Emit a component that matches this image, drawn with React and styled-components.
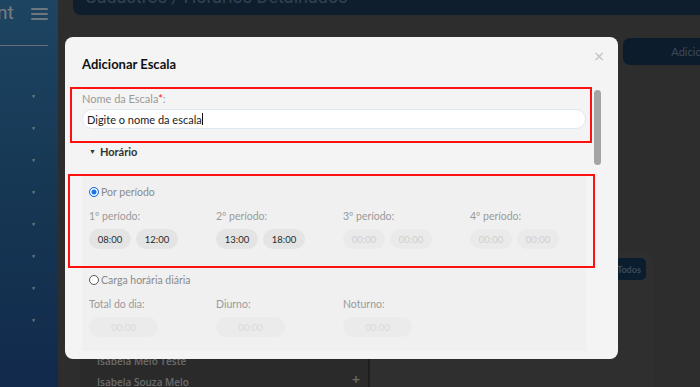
import React from 'react';
import styled, { createGlobalStyle } from 'styled-components';

const GlobalStyle = createGlobalStyle`
  html, body {
    margin: 0;
    padding: 0;
    width: 700px;
    height: 387px;
    overflow: hidden;
  }
  body {
    font-family: Lato, "Open Sans", "Liberation Sans", sans-serif;
    background: #5a5a5a;
  }
  * { box-sizing: border-box; }
`;

const menuItems = 8;
const names = [
  'Ana Paula Souza', 'Bruno Carvalho', 'Carla Mendes', 'Daniel Oliveira',
  'Eduardo Lima', 'Fernanda Alves', 'Gabriel Rocha', 'Helena Costa',
  'Igor Martins', 'Isabela Melo', 'Isabela Melo Lima', 'Isabela Melo Teste',
  'Isabela Souza Melo',
];

function App() {
  return (
    <>
      <GlobalStyle />
      <Page>
        <Sidebar>
          <Brand>
            <BrandText>nt</BrandText>
            <Burger><span /><span /><span /></Burger>
          </Brand>
          <Menu>
            {Array.from({ length: menuItems }).map((_, i) => (
              <MenuRow key={i}><Caret>▼</Caret></MenuRow>
            ))}
          </Menu>
        </Sidebar>
        <Main>
          <Header>Cadastros / Horários Detalhados</Header>
          <Toolbar>
            <DarkButton>Adicionar Escala</DarkButton>
          </Toolbar>
          <Content>
            <ListCard>
              {names.map((n, i) => (
                <ListRow key={n}>
                  {n}
                  {i === names.length - 1 && <Plus>+</Plus>}
                </ListRow>
              ))}
            </ListCard>
            <RightCol>
              <RightCard>
                <SmallButton>Todos</SmallButton>
              </RightCard>
            </RightCol>
          </Content>
        </Main>

        <Overlay>
          <Modal>
            <Close>×</Close>
            <Title>Adicionar Escala</Title>
            <Thumb />
            <Body>
              <Highlight>
                <Label>Nome da Escala<Req>*</Req>:</Label>
                <TextInput>Digite o nome da escala<CaretLine /></TextInput>
              </Highlight>

              <Section>
                <Tri>▼</Tri>Horário
              </Section>

              <Panel>
                <PeriodBox>
                  <RadioRow>
                    <Radio $checked />Por período
                  </RadioRow>
                  <Periods>
                    {[
                      ['1º período:', '08:00', '12:00', false],
                      ['2º período:', '13:00', '18:00', false],
                      ['3º período:', '00:00', '00:00', true],
                      ['4º período:', '00:00', '00:00', true],
                    ].map(([label, a, b, off]) => (
                      <Period key={label}>
                        <FieldLabel>{label}</FieldLabel>
                        <PillPair>
                          <Pill $off={off}>{a}</Pill>
                          <Pill $off={off}>{b}</Pill>
                        </PillPair>
                      </Period>
                    ))}
                  </Periods>
                </PeriodBox>

                <LoadBox>
                  <RadioRow>
                    <Radio />Carga horária diária
                  </RadioRow>
                  <Periods>
                    {['Total do dia:', 'Diurno:', 'Noturno:'].map((l) => (
                      <Period key={l}>
                        <FieldLabel>{l}</FieldLabel>
                        <WidePill>00:00</WidePill>
                      </Period>
                    ))}
                  </Periods>
                </LoadBox>
              </Panel>
            </Body>
          </Modal>
        </Overlay>
      </Page>
    </>
  );
}

const Page = styled.div`
  position: relative;
  display: flex;
  width: 700px;
  height: 387px;
  overflow: hidden;
`;

const Sidebar = styled.aside`
  width: 58px;
  flex-shrink: 0;
  background: linear-gradient(180deg, #3a8ac4 0%, #2c6ea8 50%, #245498 100%);
`;

const Brand = styled.div`
  display: flex;
  align-items: center;
  justify-content: space-between;
  width: 48px;
  height: 46px;
  padding: 0 0 20px 0;
  border-bottom: 1px solid #c8e2f4;
`;

const BrandText = styled.span`
  margin-left: -3px;
  font-family: Roboto, sans-serif;
  font-size: 19px;
  color: #f0f6fc;
`;

const Burger = styled.div`
  display: flex;
  flex-direction: column;
  gap: 3px;
  width: 17px;
  margin-top: 2px;
  span {
    display: block;
    height: 2px;
    background: #d6ecfc;
    border-radius: 1px;
  }
`;

const Menu = styled.div`
  padding-top: 34px;
`;

const MenuRow = styled.div`
  height: 32px;
  display: flex;
  align-items: center;
  padding-left: 31px;
`;

const Caret = styled.span`
  font-size: 5px;
  color: #f4f4f4;
`;

const Main = styled.main`
  flex: 1;
  min-width: 0;
  padding-left: 15px;
`;

const Header = styled.div`
  margin: -22px -40px 0 0;
  height: 37px;
  padding: 8px 12px 0;
  border-radius: 0 0 8px 8px;
  background: #1e3c58;
  color: #6484a4;
  font-family: Roboto, sans-serif;
  font-size: 18px;
  line-height: 22px;
  white-space: nowrap;
`;

const Toolbar = styled.div`
  display: flex;
  justify-content: flex-end;
  margin: 23px -98px 0 0;
  height: 27px;
`;

const DarkButton = styled.div`
  flex-shrink: 0;
  width: 175px;
  height: 27px;
  border-radius: 7px;
  background: #183858;
  color: #7894b0;
  font-size: 11px;
  display: flex;
  align-items: center;
  justify-content: center;
`;

const Content = styled.div`
  display: flex;
  margin-top: 20px;
  margin-left: 7px;
`;

const ListCard = styled.div`
  flex-shrink: 0;
  width: 290px;
  padding: 34px 16px 0 17px;
  border-right: 2px solid #3c3c3c;
  background: #545454;
  height: 320px;
`;

const ListRow = styled.div`
  position: relative;
  height: 21px;
  display: flex;
  align-items: center;
  font-family: "Open Sans", sans-serif;
  font-size: 10px;
  font-weight: 600;
  color: #d6d6d6;
`;

const Plus = styled.span`
  position: absolute;
  right: -8px;
  top: -1px;
  font-size: 14px;
`;

const RightCol = styled.div`
  flex: 1;
  padding-top: 168px;
`;

const RightCard = styled.div`
  width: 283px;
  height: 200px;
  background: #5e5e5e;
  border-radius: 8px;
  display: flex;
  justify-content: flex-end;
  padding: 5px 7px 0 0;
`;

const SmallButton = styled.div`
  width: 34px;
  height: 22px;
  border-radius: 5px;
  background: #143c60;
  color: #7894b0;
  font-size: 9px;
  font-weight: 700;
  display: flex;
  align-items: center;
  justify-content: center;
`;

const Overlay = styled.div`
  position: absolute;
  inset: 0;
  background: rgba(0, 0, 0, 0.5);
  padding: 37px 0 0 65px;
`;

const Modal = styled.div`
  position: relative;
  width: 553px;
  height: 322px;
  background: #f4f4f4;
  border-radius: 8px;
  overflow: hidden;
`;

const Close = styled.span`
  position: absolute;
  top: 11px;
  right: 13px;
  font-size: 14px;
  color: #c0c0c0;
  font-family: "DejaVu Sans", sans-serif;
`;

const Title = styled.h2`
  margin: 0;
  padding: 19px 17px 0;
  height: 35px;
  font-size: 13px;
  line-height: 16px;
  font-weight: 700;
  color: #111;
`;

const Thumb = styled.div`
  position: absolute;
  top: 53px;
  right: 17px;
  width: 7px;
  height: 75px;
  border-radius: 4px;
  background: #a4a4a4;
`;

const Body = styled.div`
  margin-top: 15px;
  padding: 0 26px 0 5px;
`;

const Highlight = styled.div`
  border: 2px solid #ff1010;
  padding: 3px 4px 12px 10px;
`;

const Label = styled.div`
  font-size: 11px;
  line-height: 14px;
  color: #9a9a9a;
  margin-bottom: 3px;
`;

const Req = styled.span`
  color: #ff2020;
`;

const TextInput = styled.div`
  display: flex;
  align-items: center;
  height: 20px;
  padding: 0 4px;
  border-radius: 10px;
  background: #fff;
  border: 1px solid #dde8f0;
  font-size: 11px;
  color: #1a1a1a;
`;

const CaretLine = styled.span`
  display: inline-block;
  width: 1px;
  height: 12px;
  background: #111;
`;

const Section = styled.div`
  margin-top: 1px;
  padding-left: 19px;
  height: 14px;
  display: flex;
  align-items: center;
  font-size: 11px;
  font-weight: 700;
  color: #333;
`;

const Tri = styled.span`
  font-size: 7px;
  margin-right: 4px;
`;

const Panel = styled.div`
  margin: 20px 6px 0 12px;
  background: #f0f0f0;
  padding-bottom: 14px;
`;

const PeriodBox = styled.div`
  margin: -4px -9px 0 -14px;
  border: 2px solid #ff1010;
  padding: 9px 0 17px 19px;
`;

const LoadBox = styled.div`
  padding: 5px 0 0 7px;
`;

const RadioRow = styled.div`
  display: flex;
  align-items: center;
  height: 14px;
  font-size: 10.5px;
  color: #8a8a8a;
`;

const Radio = styled.span`
  width: 10px;
  height: 10px;
  margin-right: 2px;
  border-radius: 50%;
  border: 1px solid ${(p) => (p.$checked ? '#1a73e8' : '#555')};
  background: ${(p) => (p.$checked ? '#1a73e8' : '#fff')};
  box-shadow: ${(p) => (p.$checked ? 'inset 0 0 0 1.5px #fff' : 'none')};
`;

const Periods = styled.div`
  display: grid;
  grid-template-columns: repeat(4, 127px);
  margin-top: 10px;
`;

const Period = styled.div`
  display: flex;
  flex-direction: column;
`;

const FieldLabel = styled.div`
  font-size: 10.5px;
  line-height: 14px;
  color: #9a9a9a;
  margin-bottom: 6px;
`;

const PillPair = styled.div`
  display: flex;
  gap: 5px;
`;

const Pill = styled.div`
  width: 42px;
  height: 20px;
  border-radius: 10px;
  background: ${(p) => (p.$off ? '#eaeaea' : '#e4e4e4')};
  color: ${(p) => (p.$off ? '#cfcfcf' : '#2a2a2a')};
  font-size: 9.5px;
  display: flex;
  align-items: center;
  justify-content: center;
`;

const WidePill = styled(Pill).attrs({ $off: true })`
  width: 69px;
  background: #ebebeb;
  color: #dadada;
`;

export default App;
